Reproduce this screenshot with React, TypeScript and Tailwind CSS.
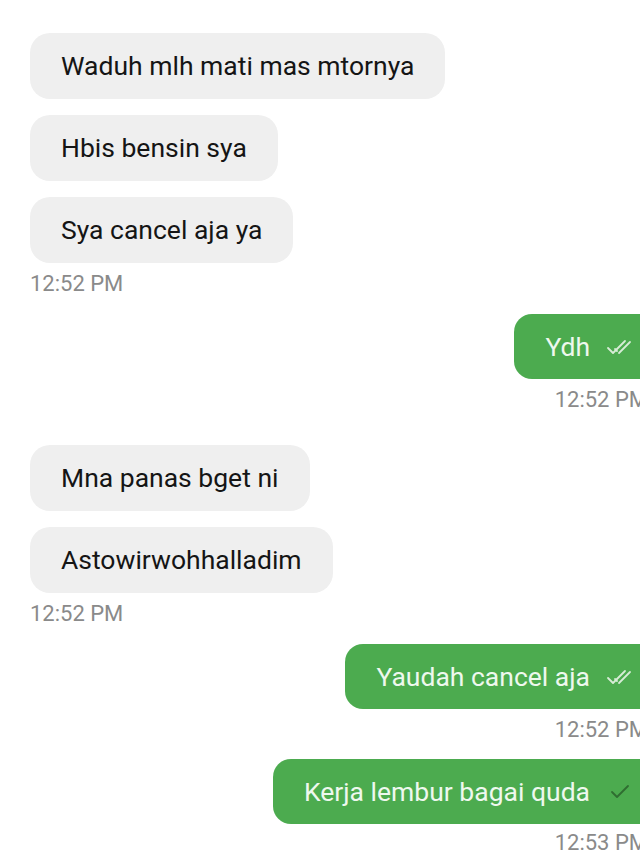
const FONT = { fontFamily: "Roboto, 'Noto Sans', Arial, sans-serif" };

type Msg = { text: string; mine?: boolean; ticks?: 1 | 2 };

function Ticks({ count }: { count: 1 | 2 }) {
  return (
    <svg width="26" height="18" viewBox="0 0 26 18" className="shrink-0 text-[#d7ecd6]">
      {count === 2 ? (
        <g fill="none" stroke="currentColor" strokeWidth="1.8" strokeLinecap="round" strokeLinejoin="round">
          <path d="M2 10 L7 15 L19 3" />
          <path d="M9 11 L11 13" />
          <path d="M13 15 L24 4" />
        </g>
      ) : (
        <path d="M6 9 L11 14 L22 3" fill="none" stroke="#2f6d31" strokeWidth="1.8" strokeLinecap="round" strokeLinejoin="round" />
      )}
    </svg>
  );
}

function Bubble({ msg }: { msg: Msg }) {
  if (msg.mine) {
    return (
      <div className="flex justify-end">
        <div className="flex h-[65px] items-center gap-4 rounded-l-[18px] rounded-r-[6px] bg-[#4cab4f] pl-[31px] pr-[18px] text-[26.5px] text-[#eef8ee]">
          <span>{msg.text}</span>
          <Ticks count={msg.ticks ?? 2} />
        </div>
      </div>
    );
  }
  return (
    <div className="flex">
      <div className="flex h-[66px] items-center rounded-[20px] bg-[#efefef] px-[31px] text-[26.5px] text-[#151515]">
        {msg.text}
      </div>
    </div>
  );
}

function Time({ label, right }: { label: string; right?: boolean }) {
  return (
    <div className={`h-[26px] text-[22px] leading-[26px] text-[#8a8a8a] ${right ? "pr-[2px] text-right" : ""}`}>
      {label}
    </div>
  );
}

export default function App() {
  return (
    <div className="h-[853px] w-[640px] overflow-hidden bg-white" style={FONT}>
      <div className="w-[650px] pl-[30px]">
        <div className="-mt-[23px] mb-[30px]">
          <Time label="12:51 PM" right />
        </div>

        <div className="flex flex-col gap-[16px]">
          <Bubble msg={{ text: "Waduh mlh mati mas mtornya" }} />
          <Bubble msg={{ text: "Hbis bensin sya" }} />
          <Bubble msg={{ text: "Sya cancel aja ya" }} />
        </div>
        <div className="mt-[8px]">
          <Time label="12:52 PM" />
        </div>

        <div className="mt-[17px]">
          <Bubble msg={{ text: "Ydh", mine: true, ticks: 2 }} />
        </div>
        <div className="mt-[8px]">
          <Time label="12:52 PM" right />
        </div>

        <div className="mt-[32px] flex flex-col gap-[16px]">
          <Bubble msg={{ text: "Mna panas bget ni" }} />
          <Bubble msg={{ text: "Astowirwohhalladim" }} />
        </div>
        <div className="mt-[8px]">
          <Time label="12:52 PM" />
        </div>

        <div className="mt-[17px]">
          <Bubble msg={{ text: "Yaudah cancel aja", mine: true, ticks: 2 }} />
        </div>
        <div className="mt-[8px]">
          <Time label="12:52 PM" right />
        </div>

        <div className="mt-[16px]">
          <Bubble msg={{ text: "Kerja lembur bagai quda", mine: true, ticks: 1 }} />
        </div>
        <div className="mt-[6px]">
          <Time label="12:53 PM" right />
        </div>
      </div>
    </div>
  );
}
